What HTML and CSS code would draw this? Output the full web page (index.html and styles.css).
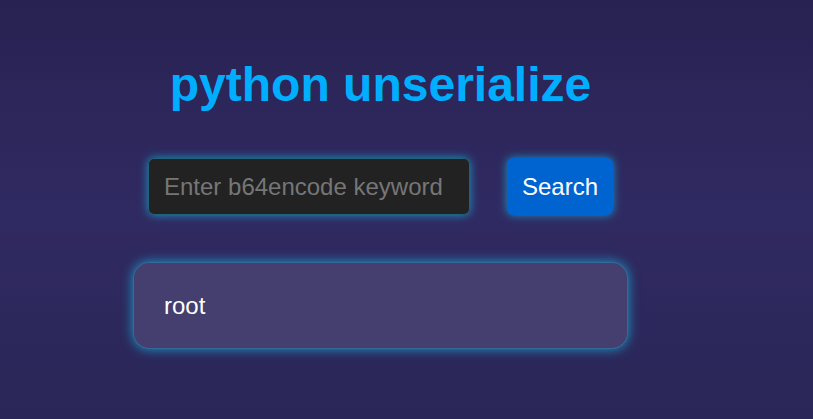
FILE: index.html
```html
<!DOCTYPE html>
<html>
<head>
<meta charset="utf-8">
<title>python unserialize</title>
<link rel="stylesheet" href="styles.css">
</head>
<body>
<main class="container">
  <h1 class="title">python unserialize</h1>
  <form class="search-row" onsubmit="return false">
    <input class="search-input" type="text" placeholder="Enter b64encode keyword">
    <button class="search-btn" type="submit">Search</button>
  </form>
  <div class="result">root</div>
</main>
</body>
</html>
```
FILE: styles.css
```css
html, body {
  margin: 0;
  padding: 0;
  height: 100%;
}
body {
  background: linear-gradient(to bottom, #282252 0%, #302a62 50%, #2a2657 100%);
  font-family: "Liberation Sans", Arial, sans-serif;
  color: #fff;
  overflow: hidden;
}
.container {
  width: 495px;
  margin-left: 133px;
  padding-top: 57px;
  display: flex;
  flex-direction: column;
  align-items: center;
}
.title {
  margin: 0;
  font-size: 48px;
  line-height: 55px;
  font-weight: bold;
  color: #00aeff;
}
.search-row {
  margin-top: 46px;
  display: flex;
  gap: 37px;
}
.search-input {
  box-sizing: border-box;
  width: 322px;
  height: 57px;
  padding: 0 16px;
  background: #222222;
  border: none;
  border-radius: 6px;
  color: #ddd;
  font-family: "Liberation Sans", Arial, sans-serif;
  font-size: 24px;
  box-shadow: inset 0 0 0 1px rgba(30, 150, 200, 0.55), 0 0 10px rgba(20, 195, 235, 0.7);
  outline: none;
}
.search-input::placeholder {
  color: #767676;
}
.search-btn {
  box-sizing: border-box;
  width: 106px;
  height: 57px;
  padding: 0;
  background: #0064d0;
  border: none;
  border-radius: 6px;
  color: #fff;
  font-family: "Liberation Sans", Arial, sans-serif;
  font-size: 24px;
  box-shadow: 0 0 10px rgba(20, 195, 235, 0.7);
  cursor: pointer;
}
.result {
  box-sizing: border-box;
  align-self: stretch;
  margin-top: 47px;
  height: 87px;
  padding: 0 31px;
  display: flex;
  align-items: center;
  background: #443f6e;
  border: none;
  border-radius: 16px;
  font-size: 24px;
  color: #fff;
  box-shadow: inset 0 0 0 1px rgba(30, 150, 200, 0.5), 0 0 12px rgba(20, 195, 235, 0.75);
}
```
